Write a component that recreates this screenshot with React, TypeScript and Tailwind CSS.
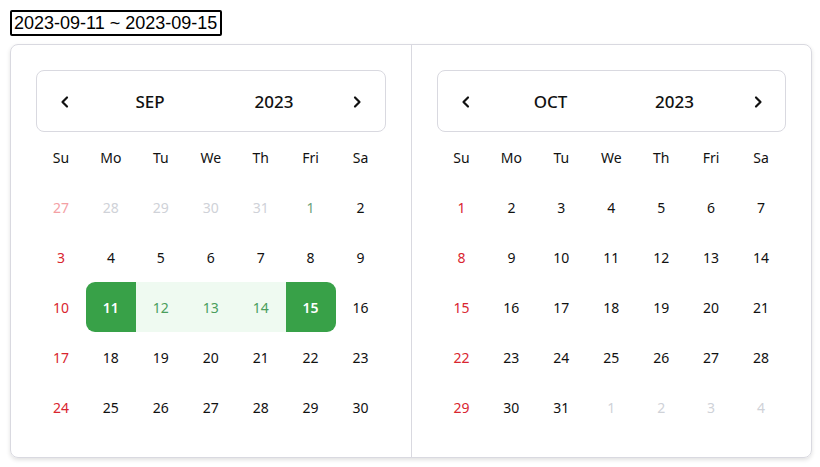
import React from 'react';

type Day = { d: number; kind: 'prev' | 'cur' | 'next' };

const WEEK = ['Su', 'Mo', 'Tu', 'We', 'Th', 'Fri', 'Sa'];

function buildMonth(year: number, month: number): Day[] {
    const first = new Date(year, month, 1).getDay();
    const len = new Date(year, month + 1, 0).getDate();
    const prevLen = new Date(year, month, 0).getDate();
    const days: Day[] = [];
    for (let i = first - 1; i >= 0; i--) days.push({ d: prevLen - i, kind: 'prev' });
    for (let i = 1; i <= len; i++) days.push({ d: i, kind: 'cur' });
    let n = 1;
    while (days.length % 7 !== 0) days.push({ d: n++, kind: 'next' });
    return days;
}

const ChevronLeft = () => (
    <svg width="16" height="16" viewBox="0 0 16 16" fill="none">
        <path d="M10 3.5 5.5 8l4.5 4.5" stroke="#111" strokeWidth="2.2" strokeLinecap="round" strokeLinejoin="round" />
    </svg>
);

const ChevronRight = () => (
    <svg width="16" height="16" viewBox="0 0 16 16" fill="none">
        <path d="M6 3.5 10.5 8 6 12.5" stroke="#111" strokeWidth="2.2" strokeLinecap="round" strokeLinejoin="round" />
    </svg>
);

function MonthPanel({ label, year, month, range }: { label: string; year: number; month: number; range?: [number, number] }) {
    const days = buildMonth(year, month);
    return (
        <div className="w-[400px] pl-[25px] pr-[25px] pt-[25px]">
            <div className="h-[62px] border border-[#d9d9e0] rounded-[8px] flex items-center pt-[1px] text-[17px] font-medium text-[#111]">
                <div className="w-[56px] flex justify-center"><ChevronLeft /></div>
                <div className="w-[114px] text-center">{label}</div>
                <div className="w-[124px] ml-[5px] text-center">{year}</div>
                <div className="w-[42px] flex justify-center"><ChevronRight /></div>
            </div>
            <div className="grid grid-cols-7 mt-[13px]">
                {WEEK.map(w => (
                    <div key={w} className="h-[24px] flex items-center justify-center text-[14px] text-[#111]">{w}</div>
                ))}
            </div>
            <div className="grid grid-cols-7 mt-[13px]">
                {days.map((day, i) => {
                    const col = i % 7;
                    const inRange = range && day.kind === 'cur' && day.d >= range[0] && day.d <= range[1];
                    const isStart = range && day.kind === 'cur' && day.d === range[0];
                    const isEnd = range && day.kind === 'cur' && day.d === range[1];
                    let cls = 'text-[#111]';
                    if (day.kind !== 'cur') cls = col === 0 ? 'text-[#f4a0a4]' : 'text-[#cfd2d8]';
                    else if (col === 0) cls = 'text-[#d9252f]';
                    if (day.kind === 'cur' && month === 8 && day.d === 1) cls = 'text-[#6aa27a]';
                    let bg = '';
                    if (inRange) {
                        bg = 'bg-[#effaf1]';
                        cls = 'text-[#4a9e5c]';
                    }
                    if (isStart || isEnd) {
                        bg = 'bg-[#38a148]';
                        cls = 'text-white font-semibold';
                    }
                    const round = `${isStart ? 'rounded-l-[9px]' : ''} ${isEnd ? 'rounded-r-[9px]' : ''}`;
                    return (
                        <div key={i} className={`h-[50px] flex items-center justify-center text-[14px] ${bg} ${cls} ${round}`}>
                            {day.d}
                        </div>
                    );
                })}
            </div>
        </div>
    );
}

export default function App() {
    return (
        <div className="p-[10px] bg-white min-h-[467px]" style={{ fontFamily: '"Noto Sans", "Open Sans", sans-serif' }}>
            <div className="w-[212px] h-[26px] border-2 border-black rounded-[2px] flex items-center px-[2px] text-[18px] text-black leading-none whitespace-nowrap overflow-hidden" style={{ fontFamily: '"Liberation Sans", Arial, sans-serif' }}>
                2023-09-11 ~ 2023-09-15
            </div>
            <div className="mt-[8px] w-[802px] h-[414px] border border-[#d9d9e0] rounded-[8px] shadow-[0_2px_4px_rgba(0,0,0,0.12)] flex">
                <MonthPanel label="SEP" year={2023} month={8} range={[11, 15]} />
                <div className="w-px bg-[#d9d9e0]" />
                <MonthPanel label="OCT" year={2023} month={9} />
            </div>
        </div>
    );
}
